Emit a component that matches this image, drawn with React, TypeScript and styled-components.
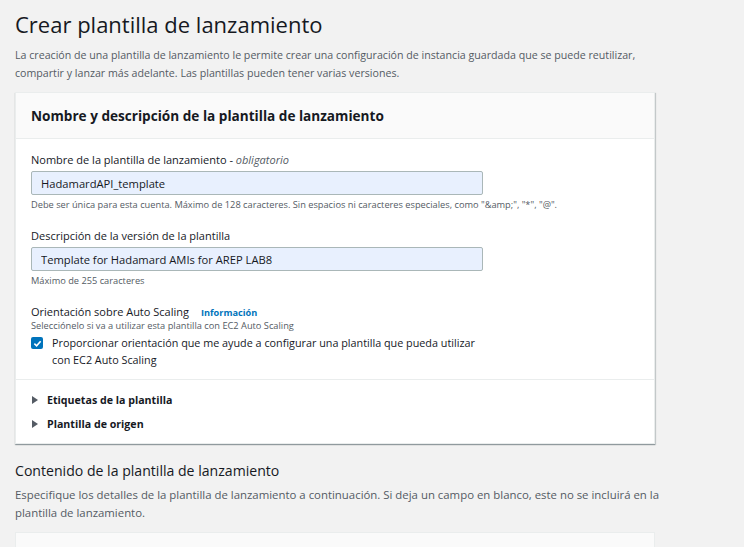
import React from "react";
import styled, { createGlobalStyle } from "styled-components";

const Global = createGlobalStyle`
  html, body { margin: 0; padding: 0; background: #f2f2f2; }
  body { font-family: "Open Sans", "Noto Sans", sans-serif; color: #16191f; }
  * { box-sizing: border-box; }
`;

const Page = styled.div`
  padding: 6px 15px 0 15px;
  width: 744px;
  height: 547px;
  overflow: hidden;
`;

const Title = styled.h1`
  margin: 0;
  font-size: 22px;
  font-weight: 400;
  line-height: 36px;
  color: #16191f;
`;

const Lead = styled.p<{ $size?: number; $gap?: number }>`
  margin: ${(p) => p.$gap ?? 4}px 0 0 0;
  font-size: ${(p) => p.$size ?? 10.65}px;
  line-height: 18px;
  color: #545b64;
  width: 645px;
`;

const Card = styled.section`
  margin-top: 10px;
  width: 640px;
  background: #fff;
  border: 1px solid #eaeded;
  box-shadow: 0 1px 1px 0 rgba(0, 28, 36, 0.3), 1px 1px 1px 0 rgba(0, 28, 36, 0.15);
`;

const CardHeader = styled.div`
  background: #fafafa;
  border-bottom: 1px solid #eaeded;
  padding: 0 15px;
  height: 46px;
  display: flex;
  align-items: center;
`;

const CardTitle = styled.h2`
  margin: 0;
  font-size: 13.6px;
  font-weight: 700;
  color: #16191f;
`;

const CardBody = styled.div`
  padding: 13px 15px 11px 15px;
  display: flex;
  flex-direction: column;
`;

const Field = styled.div<{ $gap?: number }>`
  display: flex;
  flex-direction: column;
  margin-top: ${(p) => p.$gap ?? 0}px;
`;

const Label = styled.label`
  font-size: 11px;
  line-height: 16px;
  color: #16191f;
  em { font-style: italic; color: #545b64; }
`;

const Input = styled.input`
  margin-top: 3px;
  width: 452px;
  height: 24px;
  border: 1px solid #aab7b8;
  border-radius: 2px;
  background: #e8f0fe;
  padding: 0 9px;
  font-family: "Open Sans", "Noto Sans", sans-serif;
  font-size: 11.2px;
  color: #16191f;
  outline: none;
`;

const Hint = styled.div<{ $tight?: boolean }>`
  margin-top: ${(p) => (p.$tight ? -1 : 3)}px;
  font-size: 9.25px;
  line-height: ${(p) => (p.$tight ? 12 : 14)}px;
  color: #545b64;
`;

const InfoLink = styled.a`
  margin-left: 12px;
  font-size: 9.2px;
  font-weight: 700;
  color: #0073bb;
  text-decoration: none;
`;

const CheckRow = styled.label`
  margin-top: 2px;
  display: flex;
  align-items: flex-start;
  gap: 9px;
  font-size: 10.8px;
  line-height: 17px;
  color: #16191f;
`;

const Box = styled.span`
  flex: 0 0 auto;
  margin-top: 3px;
  width: 12px;
  height: 12px;
  border-radius: 2px;
  background: #0073bb;
  display: flex;
  align-items: center;
  justify-content: center;
`;

const Divider = styled.div`
  border-top: 1px solid #eaeded;
`;

const Expanders = styled.div`
  padding: 8px 15px 7px 16px;
  display: flex;
  flex-direction: column;
`;

const Expander = styled.div`
  display: flex;
  align-items: center;
  gap: 9px;
  height: 24px;
  font-size: 10.65px;
  font-weight: 700;
  color: #16191f;
`;

const Caret = styled.span`
  width: 0;
  height: 0;
  border-top: 4px solid transparent;
  border-bottom: 4px solid transparent;
  border-left: 6px solid #545b64;
`;

const SectionTitle = styled.h2`
  margin: 15px 0 0 0;
  font-size: 14.1px;
  font-weight: 400;
  line-height: 24px;
  color: #16191f;
`;

const NextCard = styled.div`
  margin-top: 10px;
  width: 640px;
  height: 30px;
  background: #fafafa;
  border: 1px solid #eaeded;
`;

export default function App() {
  return (
    <Page>
      <Global />
      <Title>Crear plantilla de lanzamiento</Title>
      <Lead>
        La creación de una plantilla de lanzamiento le permite crear una configuración de instancia guardada que se puede reutilizar,
        compartir y lanzar más adelante. Las plantillas pueden tener varias versiones.
      </Lead>
      <Card>
        <CardHeader>
          <CardTitle>Nombre y descripción de la plantilla de lanzamiento</CardTitle>
        </CardHeader>
        <CardBody>
          <Field>
            <Label>
              Nombre de la plantilla de lanzamiento - <em>obligatorio</em>
            </Label>
            <Input defaultValue="HadamardAPI_template" />
            <Hint>Debe ser única para esta cuenta. Máximo de 128 caracteres. Sin espacios ni caracteres especiales, como "&amp;amp;", "*", "@".</Hint>
          </Field>
          <Field $gap={16}>
            <Label>Descripción de la versión de la plantilla</Label>
            <Input defaultValue="Template for Hadamard AMIs for AREP LAB8" />
            <Hint>Máximo de 255 caracteres</Hint>
          </Field>
          <Field $gap={16}>
            <Label>
              Orientación sobre Auto Scaling<InfoLink>Información</InfoLink>
            </Label>
            <Hint $tight>Selecciónelo si va a utilizar esta plantilla con EC2 Auto Scaling</Hint>
            <CheckRow>
              <Box>
                <svg width="9" height="9" viewBox="0 0 10 10">
                  <path d="M1.5 5.2 L4 7.5 L8.5 2.5" fill="none" stroke="#fff" strokeWidth="1.8" />
                </svg>
              </Box>
              <span>
                Proporcionar orientación que me ayude a configurar una plantilla que pueda utilizar
                <br />
                con EC2 Auto Scaling
              </span>
            </CheckRow>
          </Field>
        </CardBody>
        <Divider />
        <Expanders>
          <Expander>
            <Caret />
            Etiquetas de la plantilla
          </Expander>
          <Expander>
            <Caret />
            Plantilla de origen
          </Expander>
        </Expanders>
      </Card>
      <SectionTitle>Contenido de la plantilla de lanzamiento</SectionTitle>
      <Lead $size={11.4} $gap={3}>
        Especifique los detalles de la plantilla de lanzamiento a continuación. Si deja un campo en blanco, este no se incluirá en la
        plantilla de lanzamiento.
      </Lead>
      <NextCard />
    </Page>
  );
}
